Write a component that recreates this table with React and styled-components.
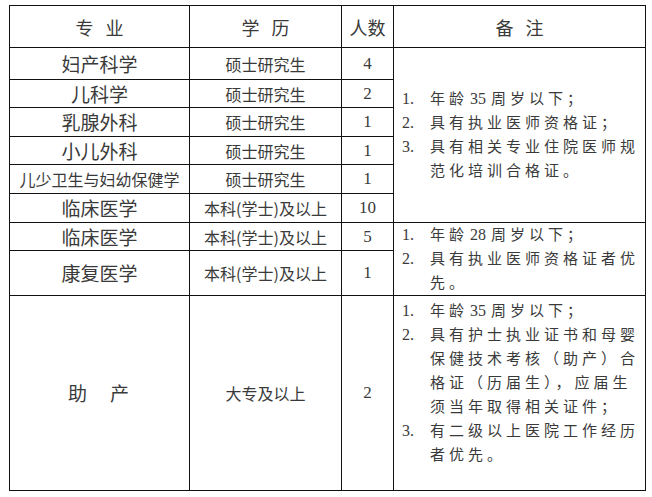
import React from "react";
import styled, { createGlobalStyle } from "styled-components";

const GlobalStyle = createGlobalStyle`
  html, body {
    margin: 0;
    padding: 0;
    background: #ffffff;
  }
  body {
    font-family: "Noto Sans CJK SC", "Liberation Sans", sans-serif;
    color: #3a3a3a;
  }
`;

const Page = styled.div`
  padding: 5px 0 0 9px;
`;

const Table = styled.table`
  border-collapse: collapse;
  table-layout: fixed;
  width: 636px;
`;

const HeadCell = styled.th`
  height: ${(p) => p.$h}px;
  padding: 0;
  border: 1px solid #111;
  font-size: 18px;
  line-height: 20px;
  font-weight: 400;
  color: #3a3a3a;
  text-align: center;
  vertical-align: middle;
  letter-spacing: ${(p) => (p.$spaced ? "12px" : "0")};
  text-indent: ${(p) => (p.$spaced ? "12px" : "0")};
  white-space: nowrap;
`;

const Cell = styled.td`
  height: ${(p) => p.$h}px;
  padding: 0;
  border: 1px solid #111;
  font-size: ${(p) => p.$size || 16}px;
  line-height: 20px;
  text-align: center;
  vertical-align: middle;
  white-space: nowrap;
  letter-spacing: ${(p) => p.$ls || 0}px;
`;

const CountCell = styled(Cell)`
  font-family: "Liberation Serif", "Noto Sans CJK SC", serif;
  font-size: 17px;
`;

const NoteCell = styled.td`
  padding: ${(p) => (p.$top ? "3px" : "0")} 2px 0 8px;
  border: 1px solid #111;
  vertical-align: ${(p) => (p.$top ? "top" : "middle")};
  font-family: "Liberation Serif", "Noto Sans CJK SC", serif;
  font-size: 15px;
  line-height: 24px;
  text-align: left;
`;

const Item = styled.div`
  display: flex;
`;

const Num = styled.span`
  flex: 0 0 28px;
  font-size: 16px;
`;

const ItemText = styled.span`
  flex: 1;
  letter-spacing: 4px;
  min-width: 0;
`;

const Digits = styled.span`
  font-size: 16px;
  letter-spacing: 0;
  margin: 0 5px 0 2px;
`;

const rows = [
  { major: "妇产科学", edu: "硕士研究生", count: "4", h: 31, note: 0 },
  { major: "儿科学", edu: "硕士研究生", count: "2", h: 27 },
  { major: "乳腺外科", edu: "硕士研究生", count: "1", h: 28 },
  { major: "小儿外科", edu: "硕士研究生", count: "1", h: 27 },
  { major: "儿少卫生与妇幼保健学", edu: "硕士研究生", count: "1", h: 28, small: true },
  { major: "临床医学", edu: "本科(学士)及以上", count: "10", h: 28 },
  { major: "临床医学", edu: "本科(学士)及以上", count: "5", h: 27, note: 1 },
  { major: "康复医学", edu: "本科(学士)及以上", count: "1", h: 44 },
  { major: "助\u3000产", edu: "大专及以上", count: "2", h: 194, note: 2, ls: 2 },
];

const notes = [
  {
    span: 6,
    items: [
      <>年龄<Digits>35</Digits>周岁以下；</>,
      "具有执业医师资格证；",
      "具有相关专业住院医师规范化培训合格证。",
    ],
  },
  {
    span: 2,
    items: [<>年龄<Digits>28</Digits>周岁以下；</>, "具有执业医师资格证者优先。"],
  },
  {
    span: 1,
    top: true,
    items: [
      <>年龄<Digits>35</Digits>周岁以下；</>,
      "具有护士执业证书和母婴保健技术考核（助产）合格证（历届生），应届生须当年取得相关证件；",
      "有二级以上医院工作经历者优先。",
    ],
  },
];

function Note({ note }) {
  return (
    <NoteCell rowSpan={note.span} $top={note.top}>
      {note.items.map((t, i) => (
        <Item key={i}>
          <Num>{i + 1}.</Num>
          <ItemText>{t}</ItemText>
        </Item>
      ))}
    </NoteCell>
  );
}

export default function App() {
  return (
    <Page>
      <GlobalStyle />
      <Table>
        <colgroup>
          <col style={{ width: 180 }} />
          <col style={{ width: 152 }} />
          <col style={{ width: 52 }} />
          <col style={{ width: 252 }} />
        </colgroup>
        <thead>
          <tr>
            <HeadCell $h={41} $spaced>专业</HeadCell>
            <HeadCell $h={41} $spaced>学历</HeadCell>
            <HeadCell $h={41}>人数</HeadCell>
            <HeadCell $h={41} $spaced>备注</HeadCell>
          </tr>
        </thead>
        <tbody>
          {rows.map((r, i) => (
            <tr key={i}>
              <Cell $h={r.h} $size={r.small ? 16 : 19} $ls={r.ls}>
                {r.major}
              </Cell>
              <Cell $h={r.h}>{r.edu}</Cell>
              <CountCell $h={r.h}>{r.count}</CountCell>
              {r.note !== undefined && <Note note={notes[r.note]} />}
            </tr>
          ))}
        </tbody>
      </Table>
    </Page>
  );
}
